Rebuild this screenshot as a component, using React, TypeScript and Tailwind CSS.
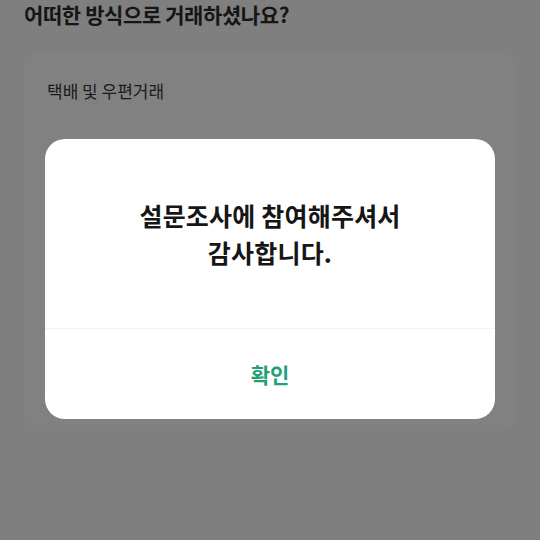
import React from "react";

export default function App() {
  return (
    <div
      className="relative w-[540px] h-[540px] overflow-hidden bg-[#7f7f7f]"
      style={{ fontFamily: '"Noto Sans CJK KR", "Noto Sans", sans-serif' }}
    >
      <div className="px-6 pt-0">
        <h1 className="text-[21px] leading-[28px] font-bold tracking-[-0.4px] text-[#151515]">
          어떠한 방식으로 거래하셨나요?
        </h1>
        <div className="mt-[25px] h-[378px] rounded-[14px] bg-[#818181] px-[23px] pt-[26px]">
          <p className="text-[17px] leading-[24px] text-[#1a1a1a]">
            택배 및 우편거래
          </p>
        </div>
      </div>

      <div className="absolute left-[45px] top-[139px] w-[450px] h-[280px] rounded-[20px] bg-white flex flex-col">
        <div className="h-[189px] flex flex-col items-center justify-center text-center">
          <p className="text-[25px] leading-[37px] font-bold tracking-[0.2px] text-[#161616]">
            설문조사에 참여해주셔서
            <br />
            감사합니다.
          </p>
        </div>
        <div className="h-px bg-[#f2f2f2]" />
        <div className="flex-1 flex items-center justify-center">
          <span className="text-[21px] leading-[28px] font-bold text-[#21a078]">확인</span>
        </div>
      </div>
    </div>
  );
}
